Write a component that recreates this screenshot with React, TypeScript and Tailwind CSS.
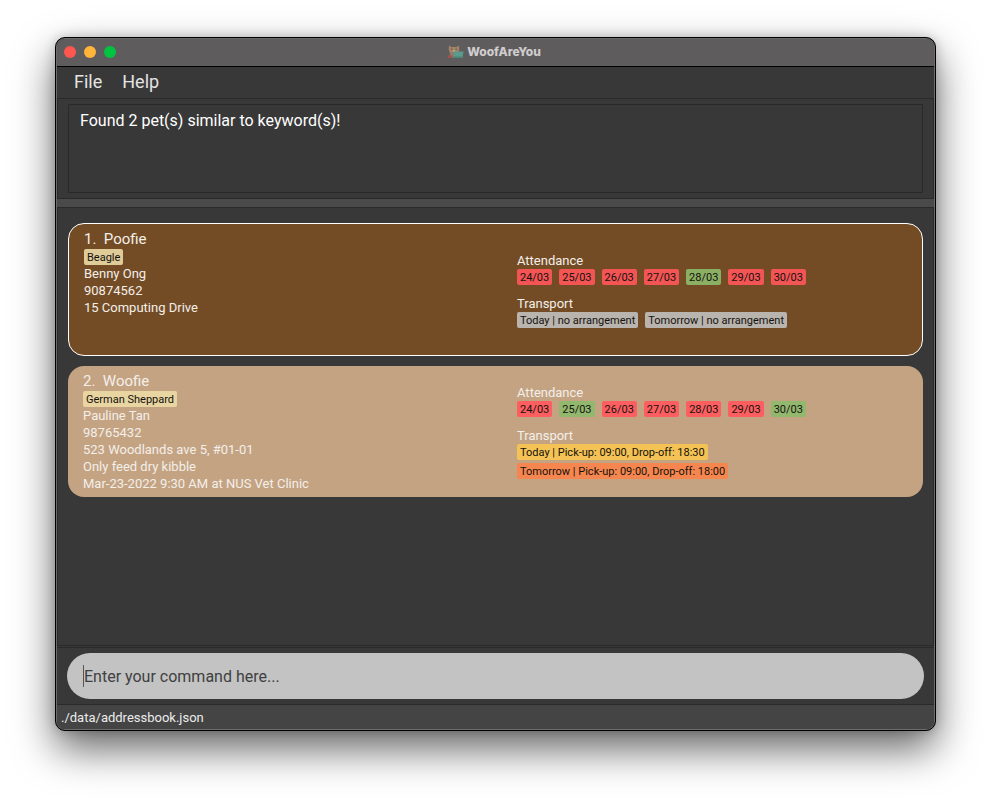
type Tag = { text: string; color: string };

type Pet = {
  name: string;
  breed: string;
  breedColor: string;
  details: string[];
  attendance: Tag[];
  transport: Tag[];
  selected: boolean;
};

const ABSENT = "bg-[#f35555]";
const PRESENT = "bg-[#8bb064]";
const ABSENT_LIGHT = "bg-[#fd5f61]";
const PRESENT_LIGHT = "bg-[#92b86e]";

const pets: Pet[] = [
  {
    name: "Poofie",
    breed: "Beagle",
    breedColor: "bg-[#dfcc99]",
    details: ["Benny Ong", "90874562", "15 Computing Drive"],
    attendance: [
      { text: "24/03", color: ABSENT },
      { text: "25/03", color: ABSENT },
      { text: "26/03", color: ABSENT },
      { text: "27/03", color: ABSENT },
      { text: "28/03", color: PRESENT },
      { text: "29/03", color: ABSENT },
      { text: "30/03", color: ABSENT },
    ],
    transport: [
      { text: "Today | no arrangement", color: "bg-[#b9b4ae]" },
      { text: "Tomorrow | no arrangement", color: "bg-[#b9b4ae]" },
    ],
    selected: true,
  },
  {
    name: "Woofie",
    breed: "German Sheppard",
    breedColor: "bg-[#e8d5a1]",
    details: [
      "Pauline Tan",
      "98765432",
      "523 Woodlands ave 5, #01-01",
      "Only feed dry kibble",
      "Mar-23-2022 9:30 AM at NUS Vet Clinic",
    ],
    attendance: [
      { text: "24/03", color: ABSENT_LIGHT },
      { text: "25/03", color: PRESENT_LIGHT },
      { text: "26/03", color: ABSENT_LIGHT },
      { text: "27/03", color: ABSENT_LIGHT },
      { text: "28/03", color: ABSENT_LIGHT },
      { text: "29/03", color: ABSENT_LIGHT },
      { text: "30/03", color: PRESENT_LIGHT },
    ],
    transport: [
      { text: "Today | Pick-up: 09:00, Drop-off: 18:30", color: "bg-[#f4c255]" },
      { text: "Tomorrow | Pick-up: 09:00, Drop-off: 18:00", color: "bg-[#f5864f]" },
    ],
    selected: false,
  },
];

function Chip({ text, color }: Tag) {
  return (
    <span className={`block h-4 w-fit rounded-xs px-[3px] pt-px text-[11px] leading-4 whitespace-nowrap text-[#15120e] ${color}`}>
      {text}
    </span>
  );
}

function PetCard({ pet, index }: { pet: Pet; index: number }) {
  return (
    <li
      className={`grid min-h-[131px] grid-cols-[31fr_29fr] rounded-2xl py-[5px] pl-[15px] text-[13px] leading-[17px] text-[#f3efe9] ${
        pet.selected ? "border border-white bg-[#734c26]" : "bg-[#c4a383]"
      }`}
    >
      <div className={pet.selected ? "min-h-[121px]" : ""}>
        <h2 className="text-[15px] leading-5 whitespace-pre">{`${index}.  ${pet.name}`}</h2>
        <Chip text={pet.breed} color={pet.breedColor} />
        {pet.details.map((line) => (
          <p key={line}>{line}</p>
        ))}
      </div>
      <div className="self-center">
        <h3>Attendance</h3>
        <div className="flex flex-wrap gap-[7px]">
          {pet.attendance.map((tag) => (
            <Chip key={tag.text} {...tag} />
          ))}
        </div>
        <h3 className="mt-[10px]">Transport</h3>
        <div className="flex flex-wrap gap-x-[7px] gap-y-[3px]">
          {pet.transport.map((tag) => (
            <Chip key={tag.text} {...tag} />
          ))}
        </div>
      </div>
    </li>
  );
}

function AppIcon() {
  return (
    <svg width="17" height="14" viewBox="0 0 17 14" aria-hidden="true">
      <path d="M2 .5l2.500 1.500h5L12 .5l.3 4.500-1.300 3H3L1.700 5z" fill="#a08468" />
      <path d="M3 7.500h7v5H2.500z" fill="#917b66" />
      <path d="M1 10.500h4.500L5 13H.5z" fill="#a5504f" />
      <circle cx="4.800" cy="4.200" r=".6" fill="#56463a" />
      <circle cx="9.200" cy="4.200" r=".6" fill="#56463a" />
      <path d="M5.800 5h2.400v1.500H5.800z" fill="#c0a086" />
      <path d="M7 6.500h9.500L15.500 13H6z" fill="#5b9a8c" />
      <path d="M5.500 11.500H15.700V13H5.500z" fill="#4c8377" />
    </svg>
  );
}

export default function App() {
  return (
    <div className="flex h-screen bg-white px-[55px] pt-[37px] pb-[73px] font-['Roboto','Liberation_Sans',sans-serif]">
      <main className="flex min-w-0 flex-1 flex-col overflow-hidden rounded-[10px] border border-black bg-[#383838] shadow-[0_18px_40px_rgba(0,0,0,0.6),0_0_12px_rgba(0,0,0,0.2)]">
        <div className="flex min-h-0 flex-1 flex-col overflow-hidden rounded-[9px] border border-[#6c6c6c]">
          <header className="grid h-7 shrink-0 grid-cols-[1fr_auto_1fr] items-center border-b border-black bg-[#5f5c5d] pr-[3px] pb-0.5">
            <div className="flex gap-2 pl-[7px]">
              <button aria-label="Close" className="size-3 rounded-full bg-[#ff5650]" />
              <button aria-label="Minimize" className="size-3 rounded-full bg-[#ffb43a]" />
              <button aria-label="Zoom" className="size-3 rounded-full bg-[#00c440]" />
            </div>
            <div className="flex items-center gap-[3px] font-[Inter,'Liberation_Sans',sans-serif]">
              <AppIcon />
              <h1 className="text-xs leading-4 font-extrabold text-[#cfcccd]">WoofAreYou</h1>
            </div>
          </header>

          <nav className="flex h-[31px] shrink-0 items-center gap-5 pb-0.5 pl-[17px] text-lg text-[#e4e4e4]">
            <button>File</button>
            <button>Help</button>
          </nav>

          <section className="flex h-[101px] shrink-0 border border-[#2a2a2a] px-[10px] py-[5px]">
            <textarea
              readOnly
              aria-label="Result"
              defaultValue="Found 2 pet(s) similar to keyword(s)!"
              className="min-w-0 flex-1 resize-none border border-[#292929] bg-transparent px-[11px] py-[5px] text-base leading-[22px] text-white outline-none"
            />
          </section>

          <div className="h-2 shrink-0 bg-[#4a4a4a]" />

          <section className="min-h-0 flex-1 border border-[#2a2a2a] px-[10px] pt-[15px]">
            <ul className="flex flex-col gap-[10px]">
              {pets.map((pet, i) => (
                <PetCard key={pet.name} pet={pet} index={i + 1} />
              ))}
            </ul>
          </section>

          <section className="mt-px shrink-0 border-y border-[#2a2a2a] px-[10px] py-[5px]">
            <div className="relative">
              <input
                aria-label="Command"
                placeholder="Enter your command here..."
                className="block h-[46px] w-full rounded-full bg-[#c3c3c3] px-[17px] text-base text-[#383838] outline-none placeholder:text-[#404040]"
              />
              <span className="absolute top-3 left-4 h-[22px] w-px bg-[#555555]" />
            </div>
          </section>

          <footer className="h-6 shrink-0 bg-[#444444] pt-px pl-1 text-[13px] leading-6 text-[#ececec]">
            ./data/addressbook.json
          </footer>
        </div>
      </main>
    </div>
  );
}
